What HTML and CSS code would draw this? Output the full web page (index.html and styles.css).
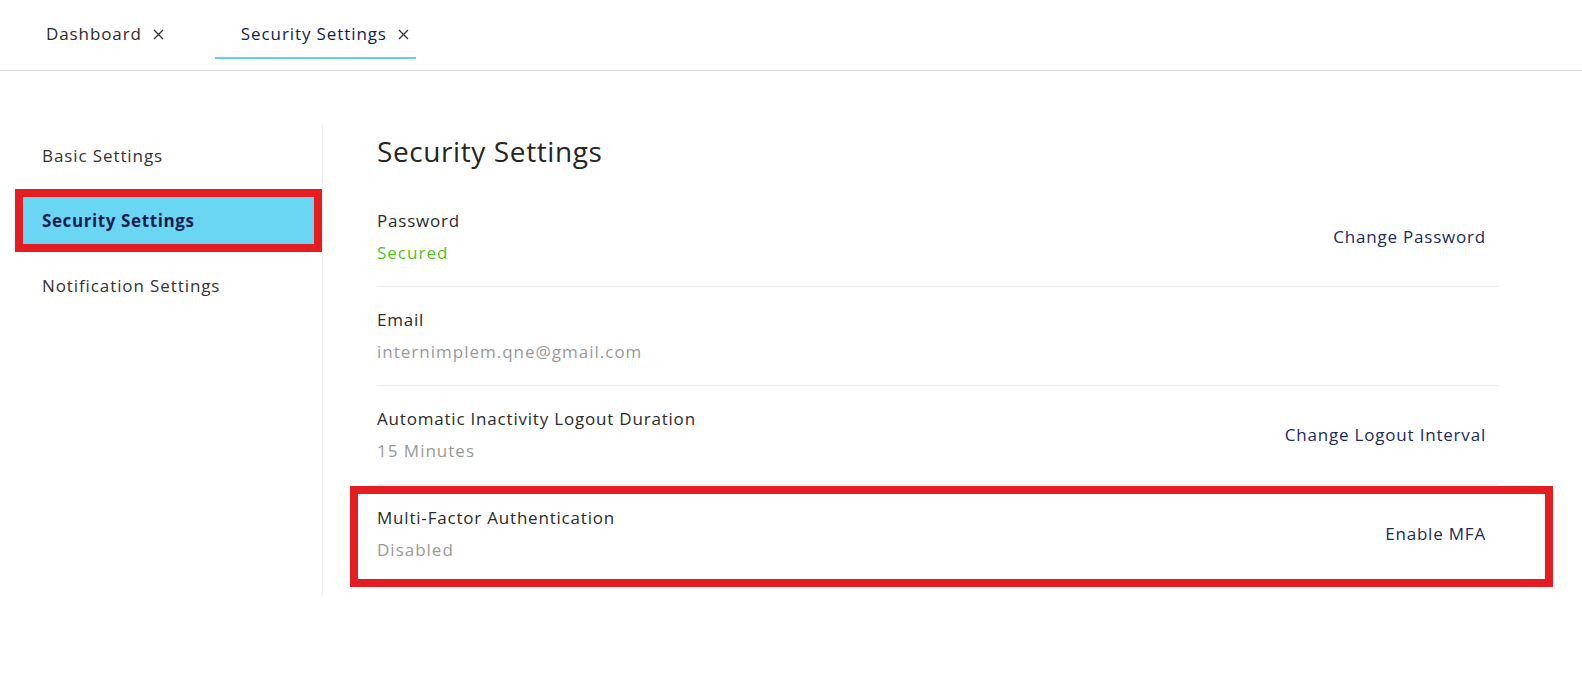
FILE: index.html
```html
<!DOCTYPE html>
<html lang="en">
<head>
<meta charset="utf-8">
<title>Security Settings</title>
<link rel="stylesheet" href="styles.css">
</head>
<body>
<header class="tabbar">
  <div class="tab">
    <span class="tab-label">Dashboard</span>
    <svg class="tab-close" width="11" height="11" viewBox="0 0 11 11"><path d="M1 1L10 10M10 1L1 10" stroke="#333" stroke-width="1.3" fill="none"/></svg>
  </div>
  <div class="tab tab-active">
    <span class="tab-label">Security Settings</span>
    <svg class="tab-close" width="11" height="11" viewBox="0 0 11 11"><path d="M1 1L10 10M10 1L1 10" stroke="#333" stroke-width="1.3" fill="none"/></svg>
  </div>
</header>
<div class="page">
  <nav class="sidebar">
    <div class="nav-item">Basic Settings</div>
    <div class="nav-item nav-active">Security Settings</div>
    <div class="nav-item">Notification Settings</div>
  </nav>
  <main class="content">
    <h1 class="title">Security Settings</h1>
    <div class="row">
      <div class="info">
        <div class="label">Password</div>
        <div class="value value-ok">Secured</div>
      </div>
      <a class="action">Change Password</a>
    </div>
    <div class="row">
      <div class="info">
        <div class="label">Email</div>
        <div class="value">internimplem.qne@gmail.com</div>
      </div>
    </div>
    <div class="row">
      <div class="info">
        <div class="label">Automatic Inactivity Logout Duration</div>
        <div class="value">15 Minutes</div>
      </div>
      <a class="action">Change Logout Interval</a>
    </div>
    <div class="row row-last">
      <div class="info">
        <div class="label">Multi-Factor Authentication</div>
        <div class="value">Disabled</div>
      </div>
      <a class="action">Enable MFA</a>
      <div class="highlight"></div>
    </div>
  </main>
</div>
</body>
</html>
```
FILE: styles.css
```css
* { box-sizing: border-box; }
html, body {
  margin: 0;
  padding: 0;
  background: #ffffff;
  font-family: "Open Sans", "Noto Sans", sans-serif;
  color: #2b2b2b;
}
.tabbar {
  height: 71px;
  border-bottom: 1px solid #dedede;
  display: flex;
  align-items: flex-start;
  padding: 10px 0 0 20px;
  gap: 44px;
}
.tab {
  display: flex;
  align-items: center;
  gap: 11px;
  padding: 12px 7px 11px 26px;
  border-bottom: 2px solid transparent;
  height: 49px;
  font-size: 17px;
  letter-spacing: 0.9px;
  line-height: 24px;
  color: #2b2b2b;
}
.tab-active {
  border-bottom-color: #62d0ef;
  color: #0f1d4e;
}
.tab-close { display: block; }
.page {
  display: flex;
  align-items: flex-start;
  padding-top: 53px;
}
.sidebar {
  width: 323px;
  height: 471px;
  border-right: 1px solid #efefef;
  padding: 8px 8px 0 23px;
  display: flex;
  flex-direction: column;
  gap: 18px;
}
.nav-item {
  height: 47px;
  display: flex;
  align-items: center;
  padding-left: 19px;
  font-size: 17px;
  letter-spacing: 0.9px;
  color: #333333;
}
.nav-active {
  background: #6bd6f4;
  color: #0f1d4e;
  font-weight: 700;
  letter-spacing: 0.6px;
  outline: 8px solid #e41d22;
}
.content {
  width: 1175px;
  padding-left: 54px;
}
.title {
  margin: 7px 0 17px;
  font-size: 28px;
  letter-spacing: 0.6px;
  line-height: 40px;
  font-weight: 500;
  color: #262626;
}
.row {
  position: relative;
  display: flex;
  align-items: center;
  justify-content: space-between;
  padding: 21px 12px 21px 0;
  border-bottom: 1px solid #ececec;
}
.row-last { border-bottom: none; }
.info {
  display: flex;
  flex-direction: column;
  gap: 8px;
}
.label, .value, .action {
  font-size: 17px;
  letter-spacing: 0.8px;
  line-height: 24px;
}
.value { letter-spacing: 1px; }
.label { color: #2b2b2b; }
.value { color: #9a9a9a; }
.value-ok { color: #4fc41f; }
.action {
  color: #1c2a5c;
  cursor: pointer;
}
.highlight {
  position: absolute;
  top: 1px;
  bottom: -4px;
  left: -27px;
  right: -55px;
  border: 8px solid #e41d22;
  pointer-events: none;
}
```
